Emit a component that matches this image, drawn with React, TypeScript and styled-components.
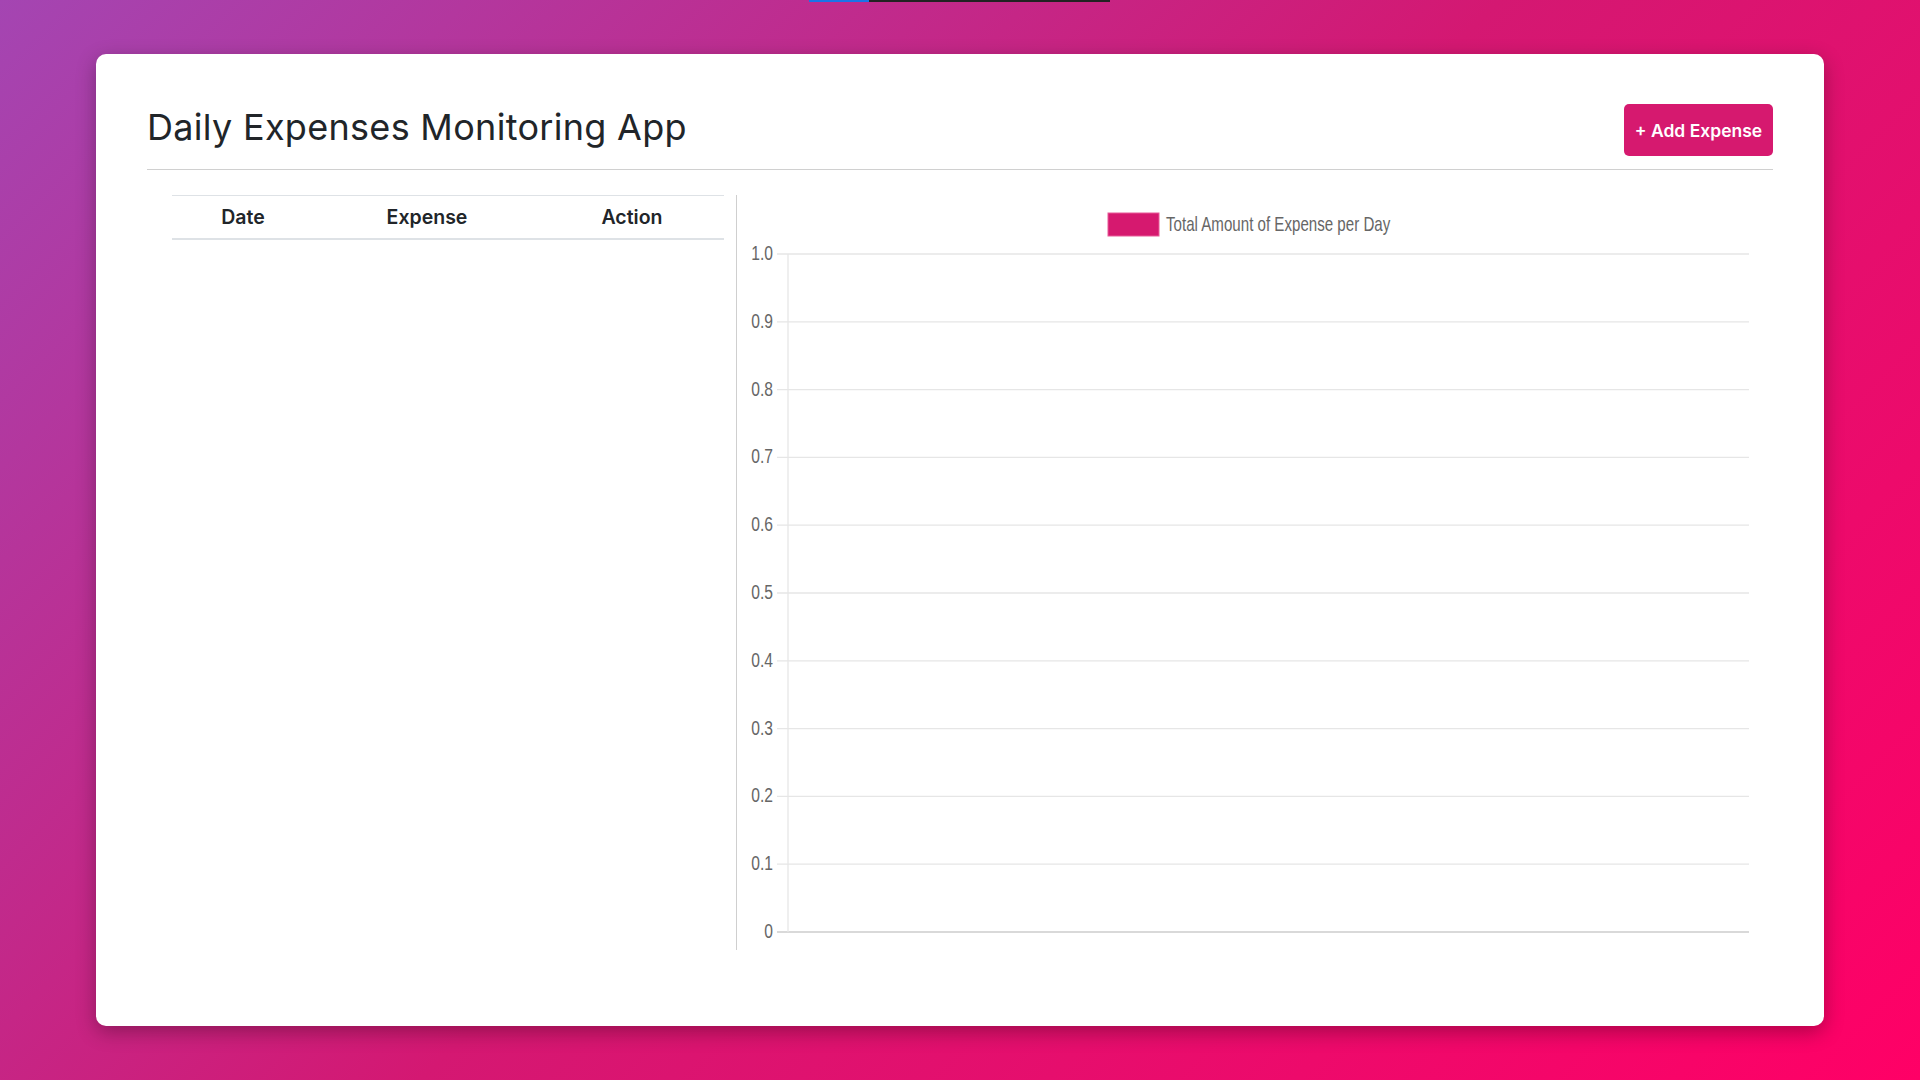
import React from 'react';
import styled, { createGlobalStyle } from 'styled-components';

const GlobalStyle = createGlobalStyle`
  html, body {
    margin: 0;
    padding: 0;
  }
  body {
    font-family: Inter, "Noto Sans", sans-serif;
    color: #212529;
  }
  * {
    box-sizing: border-box;
  }
`;

const Page = styled.div`
  min-height: 100vh;
  display: flex;
  align-items: center;
  justify-content: center;
  background: linear-gradient(135deg, #a445b2 0%, #d41872 50%, #ff0066 100%);
`;

// thin loading strip stuck at the very top of the window
const TopStrip = styled.div`
  position: fixed;
  top: 0;
  left: 809px;
  width: 301px;
  height: 2px;
  background: #222;
  span {
    display: block;
    width: 60px;
    height: 100%;
    background: #1a73e8;
  }
`;

const Card = styled.div`
  width: 90vw;
  height: 90vh;
  background: #fff;
  border-radius: 10px;
  padding: 50px 51px 0 51px;
  box-shadow: 0 6px 20px rgba(0, 0, 0, 0.3);
`;

const Header = styled.div`
  display: flex;
  align-items: center;
  justify-content: space-between;
  padding-bottom: 13px;
  border-bottom: 1px solid #d0d0d0;
`;

const Title = styled.h1`
  margin: 0 0 7px 0;
  font-size: 36px;
  font-weight: 400;
  line-height: 42px;
  color: #212529;
  letter-spacing: 0.3px;
`;

const AddButton = styled.button`
  width: 149px;
  height: 52px;
  padding: 0;
  border: none;
  border-radius: 5px;
  background: #d6196f;
  color: #fff;
  font-family: Inter, "Noto Sans", sans-serif;
  font-size: 17.5px;
  font-weight: 600;
  cursor: pointer;
`;

const Body = styled.div`
  display: flex;
  margin-top: 25px;
`;

const Left = styled.div`
  width: 590px;
  height: 755px;
  padding: 0 12px 0 25px;
  border-right: 1px solid #cfcfcf;
`;

const Table = styled.table`
  width: 552px;
  border-collapse: collapse;
  table-layout: fixed;
  th {
    padding: 9px 12px 9px 12px;
    font-size: 19.5px;
    font-weight: 600;
    line-height: 24px;
    text-align: center;
    border-top: 1px solid #dee2e6;
    border-bottom: 2px solid #dee2e6;
  }
`;

const Right = styled.div`
  flex: 1;
  height: 755px;
`;

const labels = ['1.0', '0.9', '0.8', '0.7', '0.6', '0.5', '0.4', '0.3', '0.2', '0.1', '0'];
const top = 59;
const step = 67.8;
const sx = 1.26;
const sy = 1.74;

const Chart = () => (
  <svg width="1036" height="755" fontFamily='"Liberation Sans", Arial, sans-serif'>
    <rect x="371" y="18" width="51" height="23" fill="#d6196f" stroke="#e85a98" strokeWidth="1" />
    <text transform={`translate(429,36) scale(${sx},${sy})`} fontSize="12" fill="#666">
      Total Amount of Expense per Day
    </text>
    {labels.map((l, i) => {
      const y = top + i * step;
      const last = i === labels.length - 1;
      return (
        <g key={l}>
          <line
            x1="40"
            x2="1012"
            y1={y}
            y2={y}
            stroke={last ? '#d9d9d9' : '#e6e6e6'}
            strokeWidth={last ? 2 : 1.3}
          />
          <text
            transform={`translate(36,${y + 6}) scale(1.3,${sy})`}
            fontSize="12"
            fill="#666"
            textAnchor="end"
          >
            {l}
          </text>
        </g>
      );
    })}
    <line x1="51" x2="51" y1={top} y2={top + 10 * step} stroke="#e6e6e6" strokeWidth="1.3" />
  </svg>
);

const App = () => (
  <Page>
    <GlobalStyle />
    <TopStrip>
      <span />
    </TopStrip>
    <Card>
      <Header>
        <Title>Daily Expenses Monitoring App</Title>
        <AddButton>+ Add Expense</AddButton>
      </Header>
      <Body>
        <Left>
          <Table>
            <colgroup>
              <col style={{ width: 142 }} />
              <col style={{ width: 226 }} />
              <col style={{ width: 184 }} />
            </colgroup>
            <thead>
              <tr>
                <th>Date</th>
                <th>Expense</th>
                <th>Action</th>
              </tr>
            </thead>
          </Table>
        </Left>
        <Right>
          <Chart />
        </Right>
      </Body>
    </Card>
  </Page>
);

export default App;
